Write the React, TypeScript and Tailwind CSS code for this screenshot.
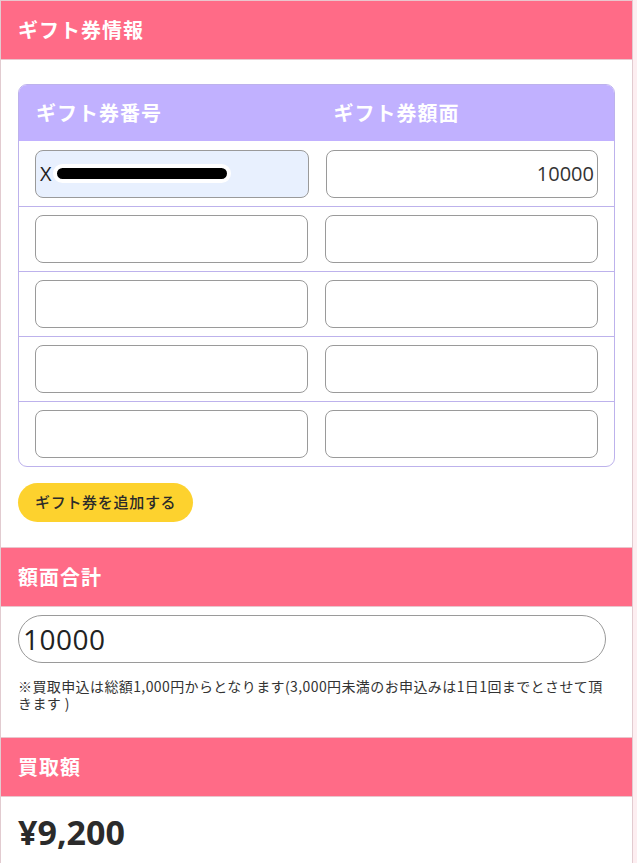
import React from 'react';

const font = "font-['Noto_Sans_CJK_JP','Noto_Sans',sans-serif]";

const SectionHeader: React.FC<{ title: string }> = ({ title }) => (
  <div className="h-[60px] bg-[#ff6b87] border-y border-[#e9c6cd] flex items-center px-[17px]">
    <h2 className="text-white font-bold text-[20px] tracking-[1px]">{title}</h2>
  </div>
);

const inputCls =
  'flex-1 h-[48px] rounded-[8px] border border-[#9a9a9a] bg-white flex items-center';

const App: React.FC = () => {
  const rows = [0, 1, 2, 3, 4];
  return (
    <div className={`min-h-screen bg-[#fdeef1] ${font}`}>
      <div className="w-[633px] bg-white border-x border-[#e2cbd0]">
        <SectionHeader title="ギフト券情報" />

        <div className="px-[17px] pt-[24px]">
          <div className="rounded-[9px] border border-[#bdb2ec] overflow-hidden">
            <div className="grid grid-cols-2 h-[56px] bg-[#c1b1ff] items-center">
              <span className="pl-[17px] text-white font-bold text-[20px] tracking-[1px]">ギフト券番号</span>
              <span className="pl-[17px] text-white font-bold text-[20px] tracking-[1px]">ギフト券額面</span>
            </div>
            {rows.map((r) => (
              <div
                key={r}
                className={`flex gap-[17px] px-[16px] h-[65px] items-center ${r > 0 ? 'border-t border-[#bdb2ec]' : ''}`}
              >
                {r === 0 ? (
                  <>
                    <div className={`${inputCls} !bg-[#e8f0fe] pl-[4px]`}>
                      <span className="font-['Open_Sans',sans-serif] text-[20px] text-[#222]">X</span>
                      <span className="ml-[1px] h-[19px] w-[178px] rounded-full bg-black border-[4px] border-white" />
                    </div>
                    <div className={`${inputCls} justify-end pr-[3px]`}>
                      <span className="font-['Open_Sans',sans-serif] text-[20px] text-[#333]">10000</span>
                    </div>
                  </>
                ) : (
                  <>
                    <div className={inputCls} />
                    <div className={inputCls} />
                  </>
                )}
              </div>
            ))}
          </div>

          <button className="mt-[16px] mb-[25px] h-[39px] px-[17px] rounded-full bg-[#fdd22e] text-[#2a2a2a] text-[15px] tracking-[0.7px] font-medium">
            ギフト券を追加する
          </button>
        </div>

        <SectionHeader title="額面合計" />

        <div className="px-[17px] pt-[8px] pb-[25px]">
          <div className="mr-[9px] h-[48px] rounded-full border border-[#9a9a9a] flex items-center pl-[4px]">
            <span className="font-['Open_Sans',sans-serif] text-[28px] tracking-[0.5px] text-[#222]">10000</span>
          </div>
          <p className="mt-[15px] text-[14px] leading-[17px] tracking-[0.4px] text-[#333] pr-[10px]">
            ※買取申込は総額1,000円からとなります(3,000円未満のお申込みは1日1回までとさせて頂きます )
          </p>
        </div>

        <SectionHeader title="買取額" />

        <div className="px-[17px] pt-[10px] pb-[12px]">
          <p className="font-['Open_Sans',sans-serif] font-bold text-[34px] text-[#2b2b2b]">¥9,200</p>
        </div>
      </div>
    </div>
  );
};

export default App;
